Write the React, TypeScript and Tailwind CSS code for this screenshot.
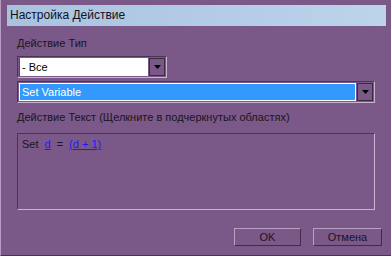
import React from "react";

const Arrow = () => (
  <svg width="7" height="4" viewBox="0 0 7 4"><path d="M0 0h7L3.5 4z" fill="#000" /></svg>
);

function Combo({ value, selected, fieldW }: { value: string; selected?: boolean; fieldW: string }) {
  return (
    <div className="flex h-[22px] items-stretch border border-t-[#4b3555] border-l-[#4b3555] border-b-[#cbb3d4] border-r-[#cbb3d4] p-px">
      {selected ? (
        <div className={`${fieldW} flex items-center bg-[#3399ff] border border-white pl-[2px] text-white`}>{value}</div>
      ) : (
        <div className={`${fieldW} flex items-center bg-white border-l border-[#5a4366] pl-[2px] text-black`}>{value}</div>
      )}
      <div className="ml-[1px] w-[16px] flex items-center justify-center border border-[#3a2a42] bg-[#7a5887]">
        <Arrow />
      </div>
    </div>
  );
}

export default function App() {
  return (
    <div
      className="w-[391px] h-[256px] bg-[#7a5887] border-l border-l-[#b99cc6] border-b border-b-[#4a3352] flex flex-col text-[11px] leading-[13px] text-[#1c1422]"
      style={{ fontFamily: '"Liberation Sans", Arial, sans-serif' }}
    >
      <div className="mt-[5px] ml-[6px] w-[379px] h-[21px] bg-gradient-to-r from-[#a9c3df] to-[#bcd3eb] flex items-center pl-[3px] text-[12px] text-[#10101a]">
        Настройка Действие
      </div>
      <div className="pl-[16px] pr-[16px] flex flex-col">
        <div className="mt-[11px]">Действие Тип</div>
        <div className="mt-[6px] w-[150px]">
          <Combo value="- Все" fieldW="w-[131px]" />
        </div>
        <div className="mt-[3px] w-[358px]">
          <Combo value="Set Variable" selected fieldW="w-[338px]" />
        </div>
        <div className="mt-[8px]">Действие Текст (Щелкните в подчеркнутых областях)</div>
        <div className="mt-[9px] w-[358px] h-[77px] border border-t-[#4b3555] border-l-[#4b3555] border-b-[#cbb3d4] border-r-[#cbb3d4] px-[4px] pt-[4px] flex items-start">
          <span>Set</span>
          <span className="ml-[6px] text-[#1a1aff] underline">d</span>
          <span className="ml-[6px]">=</span>
          <span className="ml-[6px] text-[#1a1aff] underline">(d + 1)</span>
        </div>
        <div className="mt-[18px] flex justify-end gap-[12px] mr-[-7px]">
          <button className="w-[67px] h-[18px] border border-t-[#b9a3c2] border-l-[#b9a3c2] border-b-[#3f2c48] border-r-[#3f2c48] text-[11px] leading-[13px] text-[#1c1422]">OK</button>
          <button className="w-[69px] h-[18px] border border-t-[#b9a3c2] border-l-[#b9a3c2] border-b-[#3f2c48] border-r-[#3f2c48] text-[11px] leading-[13px] text-[#1c1422]">Отмена</button>
        </div>
      </div>
    </div>
  );
}
